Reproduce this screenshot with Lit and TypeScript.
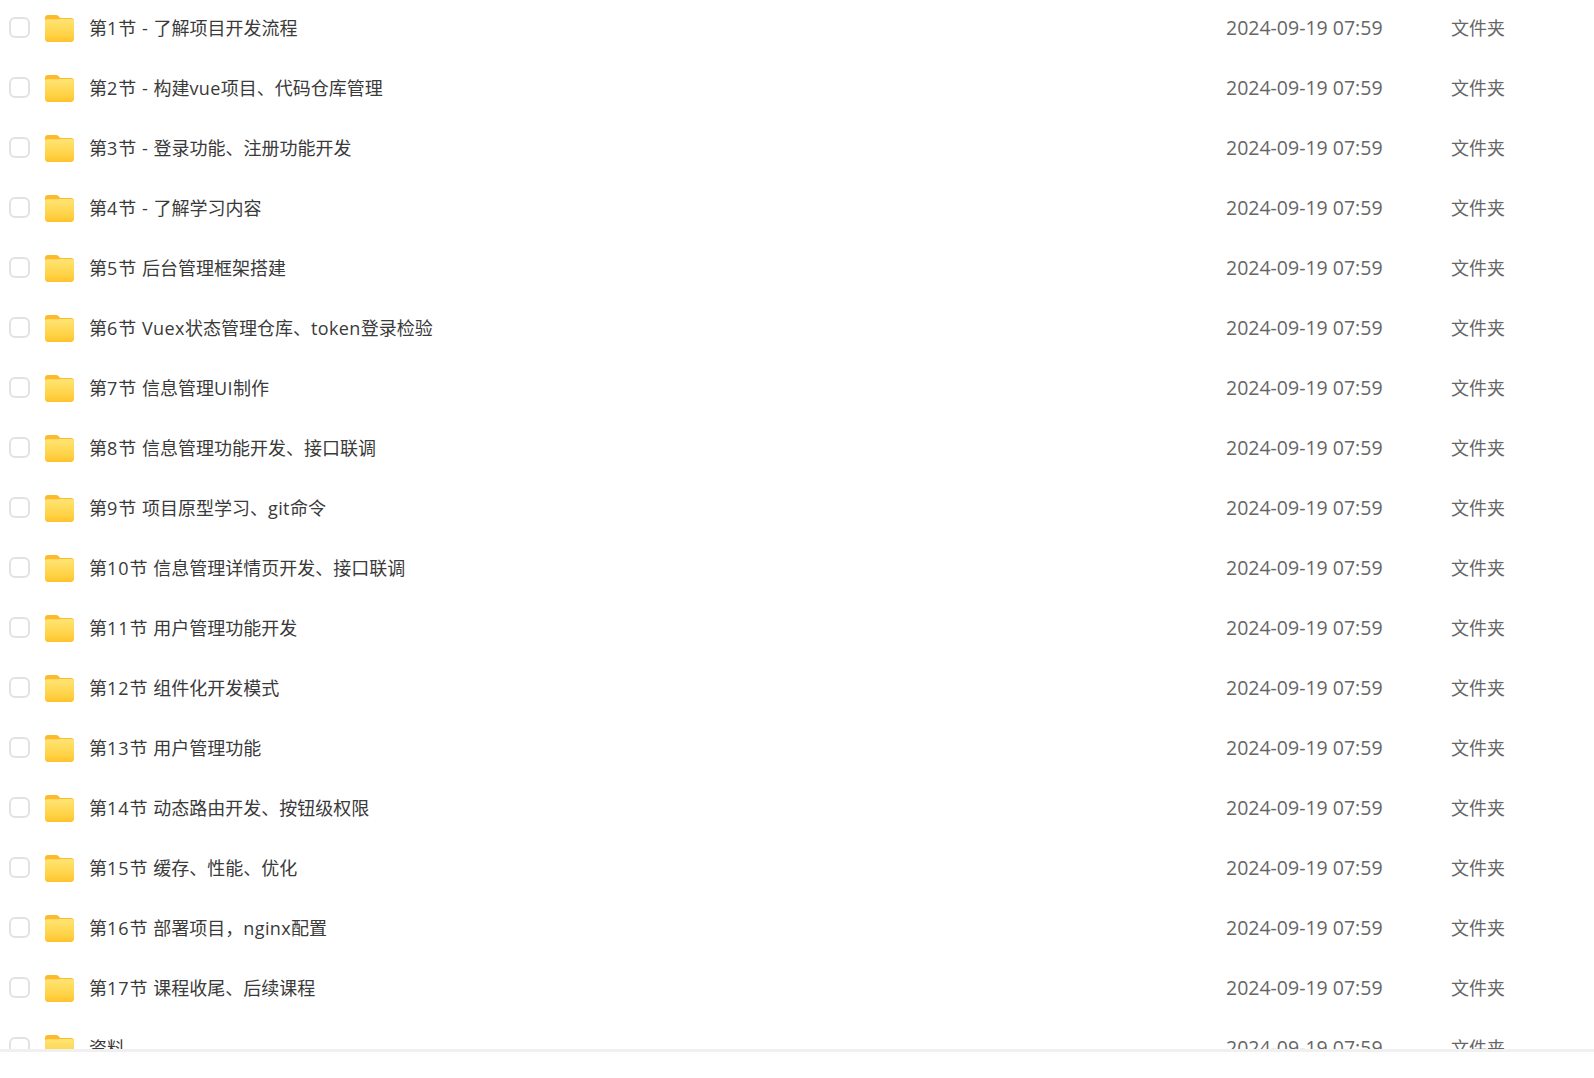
import { LitElement, html, css, svg } from "lit";
import { customElement } from "lit/decorators.js";

const NAMES: [string, unknown][] = [
  ["1", "节 - 了解项目开发流程"],
  ["2", html`节 - 构建<span class="latin">vue</span>项目、代码仓库管理`],
  ["3", "节 - 登录功能、注册功能开发"],
  ["4", "节 - 了解学习内容"],
  ["5", "节 后台管理框架搭建"],
  ["6", html`节 <span class="latin">Vuex</span>状态管理仓库、<span class="latin">token</span>登录检验`],
  ["7", html`节 信息管理<span class="latin">UI</span>制作`],
  ["8", "节 信息管理功能开发、接口联调"],
  ["9", html`节 项目原型学习、<span class="latin">git</span>命令`],
  ["10", "节 信息管理详情页开发、接口联调"],
  ["11", "节 用户管理功能开发"],
  ["12", "节 组件化开发模式"],
  ["13", "节 用户管理功能"],
  ["14", "节 动态路由开发、按钮级权限"],
  ["15", "节 缓存、性能、优化"],
  ["16", html`节 部署项目，<span class="latin">nginx</span>配置`],
  ["17", "节 课程收尾、后续课程"],
];

const folder = (i: number) => html`<svg class="folder" viewBox="0 0 30 28" width="29" height="27" preserveAspectRatio="none">
  <defs>
    <linearGradient id="g${i}" x1="0" y1="0" x2="0" y2="1">
      <stop offset="0" stop-color="#ffe474"></stop>
      <stop offset="0.7" stop-color="#ffd245"></stop>
      <stop offset="1" stop-color="#ffc22c"></stop>
    </linearGradient>
  </defs>
  ${svg`<path fill="#fdbb2c" d="M0 3C0 1.300 1.200 0 3 0h8.500c1 0 1.700.4 2.400 1.100L15.800 3H27c1.700 0 3 1.300 3 3v6H0z"></path>
  <path fill="url(#g${i})" d="M0 6.500C0 5.100 1.100 4.500 2.500 4.500h10c1.200 0 1.800-.3 2.700-.3H27.500C29 4.200 30 5.200 30 6.700V25c0 1.700-1.300 3-3 3H3c-1.700 0-3-1.300-3-3z"></path>`}
</svg>`;

const row = (i: number, name: unknown) => html`<div class="row">
  <span class="check"></span>
  ${folder(i)}
  <span class="name">${name}</span>
  <span class="date">2024-09-19 07:59</span>
  <span class="type">文件夹</span>
</div>`;

@customElement("app-root")
export class AppRoot extends LitElement {
  static styles = css`
    :host {
      display: block;
      width: 1594px;
      height: 1078px;
      background: #fff;
      font-family: "Open Sans", "Noto Sans CJK SC", "Noto Sans", sans-serif;
      overflow: hidden;
    }
    .viewport {
      height: 1049px;
      overflow: hidden;
      border-bottom: 3px solid #f0f0f0;
    }
    .list {
      margin-top: -3px;
    }
    .row {
      display: flex;
      align-items: center;
      height: 60px;
      font-size: 18px;
    }
    .check {
      flex: none;
      box-sizing: border-box;
      width: 21px;
      height: 21px;
      margin-left: 9px;
      border: 2px solid #e2e2e2;
      border-radius: 6px;
      background: #fff;
    }
    .folder {
      flex: none;
      margin-left: 15px;
      margin-top: 2px;
    }
    .name {
      flex: none;
      width: 1137px;
      margin-left: 15px;
      color: #3a3a3a;
      white-space: nowrap;
      word-spacing: 1px;
    }
    .num {
      letter-spacing: 1px;
    }
    .latin {
      letter-spacing: 0.4px;
    }
    .date {
      flex: none;
      width: 225px;
      color: #666;
      font-size: 19.5px;
      white-space: nowrap;
    }
    .type {
      flex: none;
      color: #666;
      white-space: nowrap;
    }
  `;

  render() {
    return html`<div class="viewport">
      <div class="list">
        ${NAMES.map(([num, rest], i) =>
          row(i, html`第<span class="num">${num}</span>${rest}`)
        )}
        ${row(17, "资料")}
      </div>
    </div>`;
  }
}
